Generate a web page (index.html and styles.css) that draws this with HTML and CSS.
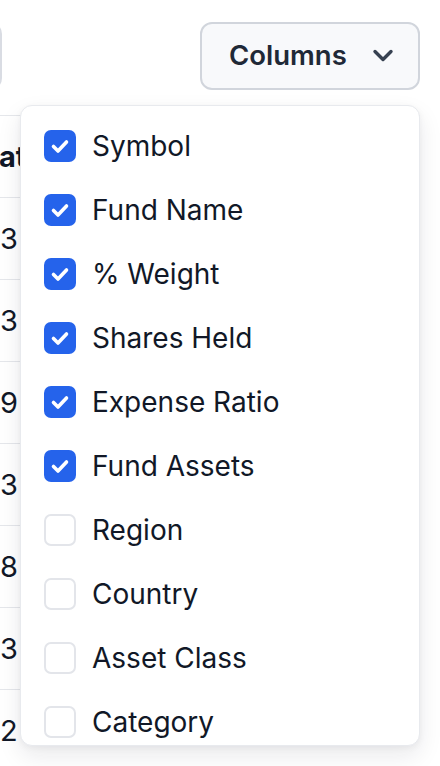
FILE: index.html
```html
<!DOCTYPE html>
<html lang="en">
<head>
  <meta charset="UTF-8">
  <title>Holdings</title>
  <link rel="stylesheet" href="styles.css">
</head>
<body>

  <div class="toolbar">
    <input class="search" type="text" placeholder="Search holdings">
    <div class="columns-menu">
      <button class="columns-btn">
        <span>Columns</span>
        <svg width="22" height="16" viewBox="0 0 22 16"><path d="M3 3.5 L11 11.5 L19 3.5" fill="none" stroke="#374151" stroke-width="3.4" stroke-linecap="round" stroke-linejoin="round"/></svg>
      </button>

      <!-- column picker -->
      <div class="dropdown">
        <label class="opt"><span class="box on"></span>Symbol</label>
        <label class="opt"><span class="box on"></span>Fund Name</label>
        <label class="opt"><span class="box on"></span>% Weight</label>
        <label class="opt"><span class="box on"></span>Shares Held</label>
        <label class="opt"><span class="box on"></span>Expense Ratio</label>
        <label class="opt"><span class="box on"></span>Fund Assets</label>
        <label class="opt"><span class="box"></span>Region</label>
        <label class="opt"><span class="box"></span>Country</label>
        <label class="opt"><span class="box"></span>Asset Class</label>
        <label class="opt"><span class="box"></span>Category</label>
      </div>
    </div>
  </div>

  <div class="table">
    <div class="row head"><div class="cell">at</div></div>
    <div class="row"><div class="cell">3</div></div>
    <div class="row"><div class="cell">3</div></div>
    <div class="row"><div class="cell">9</div></div>
    <div class="row"><div class="cell">3</div></div>
    <div class="row"><div class="cell">8</div></div>
    <div class="row"><div class="cell">3</div></div>
    <div class="row"><div class="cell">2</div></div>
  </div>

</body>
</html>
```

FILE: styles.css
```css
body { margin: 0; font-family: Inter, "Noto Sans", sans-serif; color: #111827; background: #fff; overflow: hidden; }

.toolbar { display: flex; justify-content: space-between; align-items: flex-start; padding-top: 22px; padding-right: 20px; }
.search { width: 200px; height: 68px; margin-left: -198px; box-sizing: border-box; border: 2px solid #d9dce3; border-radius: 12px; background: #fff; }

.columns-menu { position: relative; }
.columns-btn { display: flex; align-items: center; gap: 25px; width: 220px; height: 68px; box-sizing: border-box; padding: 0 0 2px 27px; border: 2px solid #d1d5dc; border-radius: 12px; background: #f8f9fb; font-family: inherit; font-size: 27.5px; font-weight: 600; color: #1f2937; }
.columns-btn svg { margin-top: 2px; }

.dropdown { position: absolute; z-index: 2; top: 83px; right: 0; width: 400px; height: 641px; box-sizing: border-box; padding-top: 8px; overflow: hidden; background: #fff; border: 1.5px solid #e8eaee; border-radius: 12px; box-shadow: 0 10px 24px rgba(17, 24, 39, 0.09), 0 2px 6px rgba(17, 24, 39, 0.05); }
.opt { display: flex; align-items: center; gap: 16px; height: 64px; padding-left: 23px; font-size: 28px; color: #111827; }
.box { width: 32px; height: 32px; box-sizing: border-box; border: 2px solid #e3e5ea; border-radius: 7px; background: #fff; }
.box.on { border: none; background: #2563eb url("data:image/svg+xml,%3Csvg xmlns='http://www.w3.org/2000/svg' viewBox='0 0 32 32'%3E%3Cpath d='M9.5 16.5l4.5 4.5 8.5-9' fill='none' stroke='white' stroke-width='3.6' stroke-linecap='round' stroke-linejoin='round'/%3E%3C/svg%3E") center / 32px no-repeat; }

.table { margin-top: 25px; width: 420px; border-top: 1.5px solid #e5e7eb; }
.row { display: flex; height: 81px; border-bottom: 1.5px solid #e5e7eb; align-items: center; }
.cell { width: 20px; white-space: nowrap; font-size: 29px; color: #111827; }
.head .cell { margin-left: -1px; font-weight: 700; }
```
